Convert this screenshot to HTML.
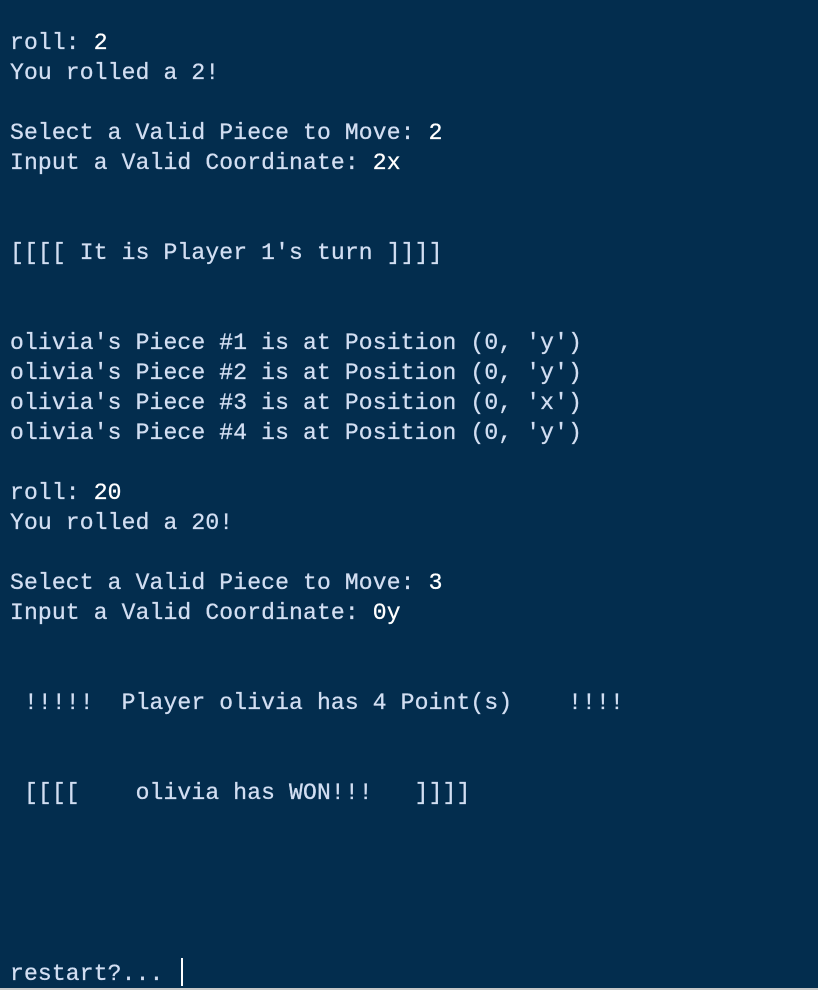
<!DOCTYPE html>
<html><head><meta charset="utf-8"><style>
html,body{margin:0;padding:0;}
body{width:818px;height:990px;background:#032d4e;overflow:hidden;position:relative;}
pre{margin:0;position:absolute;left:10px;top:28px;font-family:"Liberation Mono",monospace;font-size:23px;line-height:30px;color:#d2def2;letter-spacing:0.15px;-webkit-text-stroke:0.3px #d2def2;}
b{font-weight:normal;color:#fff;-webkit-text-stroke:0.3px #fff;}
.cur{display:inline-block;width:2px;height:28px;background:#fff;vertical-align:-6px;margin-left:4px;}
.bot{position:absolute;left:0;bottom:0;width:818px;height:2px;background:#c8c8c8;}
</style></head><body>
<pre>roll: <b>2</b>
You rolled a 2!

Select a Valid Piece to Move: <b>2</b>
Input a Valid Coordinate: <b>2x</b>


[[[[ It is Player 1's turn ]]]]


olivia's Piece #1 is at Position (0, 'y')
olivia's Piece #2 is at Position (0, 'y')
olivia's Piece #3 is at Position (0, 'x')
olivia's Piece #4 is at Position (0, 'y')

roll: <b>20</b>
You rolled a 20!

Select a Valid Piece to Move: <b>3</b>
Input a Valid Coordinate: <b>0y</b>


 !!!!!  Player olivia has 4 Point(s)    !!!!


 [[[[    olivia has WON!!!   ]]]]





restart?... <span class="cur"></span></pre>
<div class="bot"></div>
</body></html>
